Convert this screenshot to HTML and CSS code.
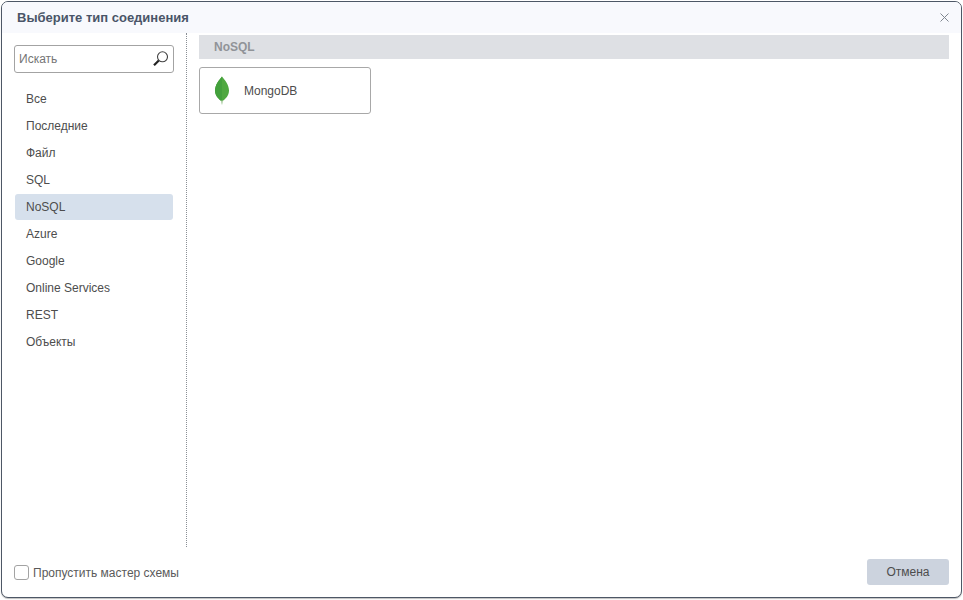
FILE: index.html
```html
<!DOCTYPE html>
<html lang="ru">
<head>
<meta charset="utf-8">
<title>Выберите тип соединения</title>
<link rel="stylesheet" href="styles.css">
</head>
<body>
<div class="dialog">
  <header class="head">
    <span class="title">Выберите тип соединения</span>
    <svg class="close" width="9" height="9" viewBox="0 0 9 9"><path d="M.5.5l8 8M8.500.5l-8 8" stroke="#808790" stroke-width="1" fill="none"/></svg>
  </header>
  <div class="body">
    <aside class="side">
      <div class="search">
        <span class="search-text">Искать</span>
        <svg class="search-icon" width="16" height="16" viewBox="0 0 16 16"><circle cx="10.500" cy="5.800" r="5" fill="none" stroke="#444" stroke-width="1.100"/><path d="M6.800 9.500l-4.800 4.800" stroke="#222" stroke-width="2.200" fill="none"/></svg>
      </div>
      <nav class="nav">
        <div class="item">Все</div>
        <div class="item">Последние</div>
        <div class="item">Файл</div>
        <div class="item">SQL</div>
        <div class="item active">NoSQL</div>
        <div class="item">Azure</div>
        <div class="item">Google</div>
        <div class="item">Online Services</div>
        <div class="item">REST</div>
        <div class="item">Объекты</div>
      </nav>
    </aside>
    <main class="main">
      <div class="group">NoSQL</div>
      <div class="card">
        <svg class="leaf" width="16" height="30" viewBox="0 0 16 30"><path d="M8 .5C11 4 15 9 15 14.500c0 5-3.500 8.500-6.500 10.500L8 29l-.6-4C4.500 23 1 19.500 1 14.500 1 9 5 4 8 .5z" fill="#4fa840"/><path d="M8 .5C5 4 1 9 1 14.500c0 5 3.500 8.500 6.400 10.500L8 25z" fill="#43a03c"/><path d="M8 24l-.6 1 .6 4 .5-4z" fill="#c9d2c0"/></svg>
        <span class="card-label">MongoDB</span>
      </div>
    </main>
  </div>
  <footer class="foot">
    <label class="check"><span class="box"></span><span class="check-label">Пропустить мастер схемы</span></label>
    <button class="cancel" type="button">Отмена</button>
  </footer>
</div>
</body>
</html>
```
FILE: styles.css
```css
* { box-sizing: border-box; }
html, body { margin: 0; height: 100%; background: #fff; }
body { padding: 1px; font-family: "Liberation Sans", Arial, sans-serif; font-size: 12px; color: #4d4d4d; }
.dialog { width: 961px; height: 597px; border: 1px solid #4d5766; border-radius: 7px; display: flex; flex-direction: column; overflow: hidden; background: #fff; box-shadow: 0 1px 1px rgba(0,0,0,.25); }
.head { height: 31px; flex: none; background: #f8f9fd; display: flex; align-items: center; justify-content: space-between; padding: 0 12px 0 15px; }
.title { font-size: 13px; font-weight: 700; color: #4a5568; }
.close { display: block; }
.body { flex: 1; display: flex; min-height: 0; }
.side { width: 185px; flex: none; border-right: 1px dotted #8a8f96; padding: 12px 12px 0 12px; }
.search { height: 28px; border: 1px solid #a3a3a3; border-radius: 3px; display: flex; align-items: center; justify-content: space-between; padding: 0 5px 0 4px; }
.search-text { color: #757575; }
.search-icon { display: block; }
.nav { margin-top: 13px; padding-left: 1px; }
.item { height: 27px; line-height: 27px; padding-left: 11px; }
.item.active { height: 26px; line-height: 26px; margin-bottom: 1px; background: #d6e0ec; border-radius: 3px; width: 158px; }
.main { flex: 1; padding: 2px 12px 0 12px; }
.group { height: 24px; line-height: 24px; background: #dee0e4; color: #909398; font-weight: 700; padding-left: 15px; }
.card { width: 172px; height: 47px; margin-top: 8px; border: 1px solid #a8a8a8; border-radius: 3px; display: flex; align-items: center; padding-left: 14px; }
.leaf { display: block; }
.card-label { margin-left: 14px; }
.foot { height: 50px; flex: none; display: flex; align-items: center; justify-content: space-between; padding: 0 12px; }
.check { display: flex; align-items: center; gap: 4px; }
.box { width: 15px; height: 15px; border: 1px solid #a3a3a3; border-radius: 3px; }
.check-label { color: #5a5a5a; padding-top: 2px; }
.cancel { width: 82px; height: 26px; border: 0; border-radius: 3px; background: #ccd3de; color: #4d4d4d; font: inherit; padding: 0; }
```
